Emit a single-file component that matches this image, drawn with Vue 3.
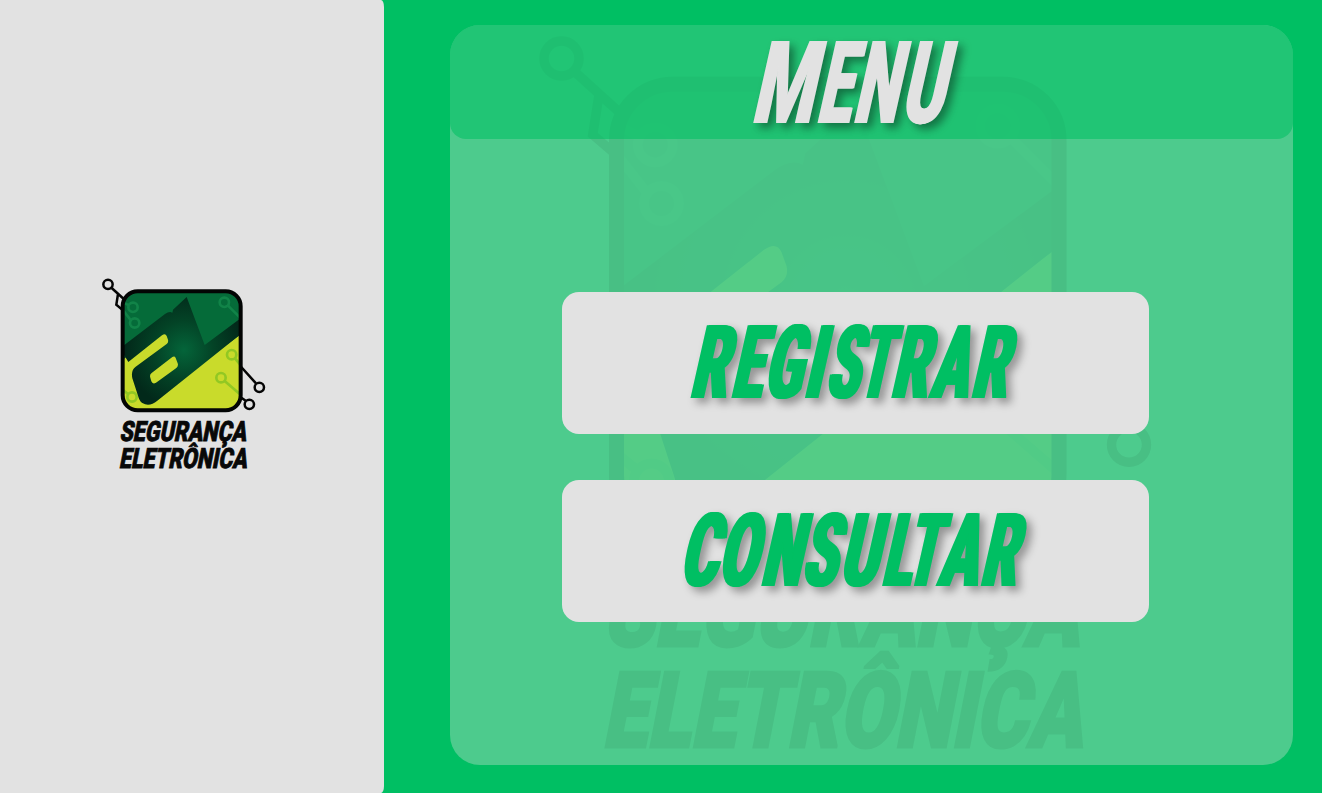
<script setup>
import { defineComponent, h } from 'vue'

// Per letter of the display face: left bearing, ink width and advance, in em
const metrics = {
  M: [.045, .79, .88], E: [.045, .485, .56], N: [.045, .615, .705], U: [.04, .58, .66],
  R: [.045, .6, .645], G: [.038, .595, .675], I: [.052, .195, .3], S: [.022, .585, .625],
  T: [.02, .59, .63], A: [.005, .675, .69], C: [.035, .6, .66], O: [.035, .615, .685], L: [.045, .475, .545],
}
const SQUEEZE = .56

// Each slot is [left edge, width] of one letter in px; bold is the extra stem width
function letters(word, bold, slots) {
  return slots.map(([left, width], i) => {
    const [b, ink, adv] = metrics[word[i]]
    const em = (width - bold) / ink
    return { ch: word[i], x: ((left + bold / 2 - b * em) / SQUEEZE).toFixed(1), w: (adv * em / SQUEEZE).toFixed(1) }
  })
}

const title = letters('MENU', 2, [[12.6, 57], [77, 31.5], [113.6, 40.5], [161, 40]])
const actions = [
  { word: 'REGISTRAR', glyphs: letters('REGISTRAR', 4, [[128, 37.5], [168.8, 29.5], [201, 36.5], [242.3, 15], [262.2, 34.5], [294.8, 31.5], [328.8, 37.5], [366, 39.5], [409, 36.5]]) },
  { word: 'CONSULTAR', glyphs: letters('CONSULTAR', 4, [[117.2, 37], [155.2, 38], [198.8, 37.5], [238.2, 36], [277, 37], [319.5, 28.5], [341.5, 33.5], [373.8, 41.5], [418.2, 36.5]]) },
]

const node = (cx, cy, cls) => h('circle', { cx, cy, r: 14, class: cls })
const BrandMark = defineComponent({
  props: { uid: String },
  setup(props) {
    return () => h('svg', { viewBox: '0 0 570 645', class: 'brand' }, [
      h('defs', [
        h('clipPath', { id: props.uid + 'c' }, [h('rect', { x: 100, y: 80, width: 350, height: 354, rx: 42 })]),
        h('radialGradient', { id: props.uid + 'g', gradientUnits: 'userSpaceOnUse', cx: 282, cy: 255, r: 175 }, [
          h('stop', { offset: '0', 'stop-color': '#04653a' }),
          h('stop', { offset: '.5', 'stop-color': '#034326' }),
          h('stop', { offset: '1', 'stop-color': '#02291a' }),
        ]),
      ]),
      h('g', { class: 'b-wire' }, [
        node(54, 58), node(508, 367), node(478, 418),
        h('path', { d: 'M65 69L108 108M84 87L79 119L100 137M451 303L498 355M451 396L467 407' }),
      ]),
      h('g', { 'clip-path': `url(#${props.uid}c)` }, [
        h('rect', { x: 90, y: 73, width: 367, height: 368, class: 'b-lime' }),
        h('path', { d: 'M90 73H457V205L340 290L220 200L90 290Z', class: 'b-green' }),
        h('path', { d: 'M90 298L226 200L244 222L290 290L200 370L90 380Z', class: 'b-lime' }),
        h('g', { class: 'b-trace-green' }, [node(129, 127), node(134, 174), node(403, 112), h('path', { d: 'M100 112L117 121M100 137L122 165M414 122L450 158' })]),
        h('g', { class: 'b-trace-lime' }, [node(425, 269), node(393, 338), node(126, 396), h('path', { d: 'M435 280L455 304M404 348L450 388M98 374L114 387' })]),
        h('path', { 'fill-rule': 'evenodd', fill: `url(#${props.uid}g)`, d: 'M90 250L225 147Q238 138 247 143L249 134L290 96L344 240L457 156V204L202 407Q178 427 157 414Q148 408 144 392L127 340Q122 316 137 305L230 237Q236 232 234 224L230 213Q226 204 216 211L115 291L90 250ZM185 324Q178 329 181 338L184 349Q188 359 198 353L259 309Q266 303 263 295L257 279Q254 272 247 276Z' }),
      ]),
      h('rect', { x: 98, y: 78.5, width: 354, height: 357.5, rx: 45, class: 'b-frame' }),
      h('g', { class: 'b-name' }, [
        h('text', { transform: 'translate(87.5 528) skewX(-11)', textLength: 380, lengthAdjust: 'spacingAndGlyphs' }, 'SEGURANÇA'),
        h('text', { transform: 'translate(86 608.5) skewX(-11)', textLength: 384, lengthAdjust: 'spacingAndGlyphs' }, 'ELETRÔNICA'),
      ]),
    ])
  },
})
</script>

<template>
  <div class="screen">
    <aside class="side"><BrandMark uid="s" class="logo" /></aside>
    <main class="stage">
      <section class="panel">
        <BrandMark uid="w" class="watermark" />
        <header class="head">
          <svg class="title" viewBox="0 0 240 114" role="heading">
            <text font-size="115.4" transform="translate(0 98) skewX(-12.7) scale(.56 1)"><tspan v-for="(g, i) in title" :key="i" :x="g.x" :textLength="g.w" lengthAdjust="spacingAndGlyphs">{{ g.ch }}</tspan></text>
          </svg>
        </header>
        <nav class="actions">
          <button v-for="a in actions" :key="a.word" type="button" class="action">
            <svg viewBox="0 0 587 142">
              <text font-size="102.5" transform="translate(0 106) skewX(-12.7) scale(.56 1)"><tspan v-for="(g, i) in a.glyphs" :key="i" :x="g.x" :textLength="g.w" lengthAdjust="spacingAndGlyphs">{{ g.ch }}</tspan></text>
            </svg>
          </button>
        </nav>
      </section>
    </main>
  </div>
</template>

<style>
body { margin: 0; overflow: hidden; background: #00bf63; }
.brand { display: block; overflow: visible; }
.b-wire { fill: none; stroke: #050505; stroke-width: 7.5; }
.b-lime { fill: #c9db2b; }
.b-green { fill: #056b39; }
.b-trace-green { fill: none; stroke: #118348; stroke-width: 8; }
.b-trace-lime { fill: none; stroke: #92c823; stroke-width: 8; }
.b-frame { fill: none; stroke: #030504; stroke-width: 12; }
.b-name { fill: #080808; stroke: #080808; stroke-width: 2.5; font: 900 84px Roboto, sans-serif; }
</style>

<style scoped>
.screen { display: flex; width: 1322px; height: 793px; background: #00bf63; }
.side { width: 383.5px; flex: none; background: #e2e2e2; border-radius: 0 3px 3px 0 / 0 7px 7px 0; }
.logo { width: 190px; height: 215px; margin: 265px 0 0 90px; }
.stage { flex: 1; padding: 25px 0 0 66px; }
.panel { position: relative; width: 843px; height: 739.5px; border-radius: 30px; overflow: hidden; background: #4dcb8d; }
.watermark { position: absolute; left: 44px; top: -39.5px; width: 712.5px; height: 806.25px; opacity: .06; }
.head { position: relative; height: 114px; border-radius: 0 0 16px 16px; background: rgba(0, 191, 99, .57); }
.title { display: block; width: 240px; height: 114px; margin-left: 290.5px; overflow: visible; fill: #e2e2e2; filter: drop-shadow(1px 0 0 #e2e2e2) drop-shadow(-1px 0 0 #e2e2e2) drop-shadow(5px 5px 4px rgba(0, 0, 0, .4)); }
.title text, .action text { font-family: Roboto, sans-serif; font-weight: 900; }
.actions { position: relative; display: flex; flex-direction: column; gap: 46px; margin: 153px 0 0 112px; }
.action { width: 587.5px; height: 142px; padding: 0; border: 0; border-radius: 17px; background: #e2e2e2; cursor: pointer; }
.action svg { display: block; width: 587px; height: 142px; overflow: visible; fill: #00bf63; filter: drop-shadow(2px 0 0 #00bf63) drop-shadow(-2px 0 0 #00bf63) drop-shadow(5px 5px 4px rgba(0, 0, 0, .35)); }
</style>
